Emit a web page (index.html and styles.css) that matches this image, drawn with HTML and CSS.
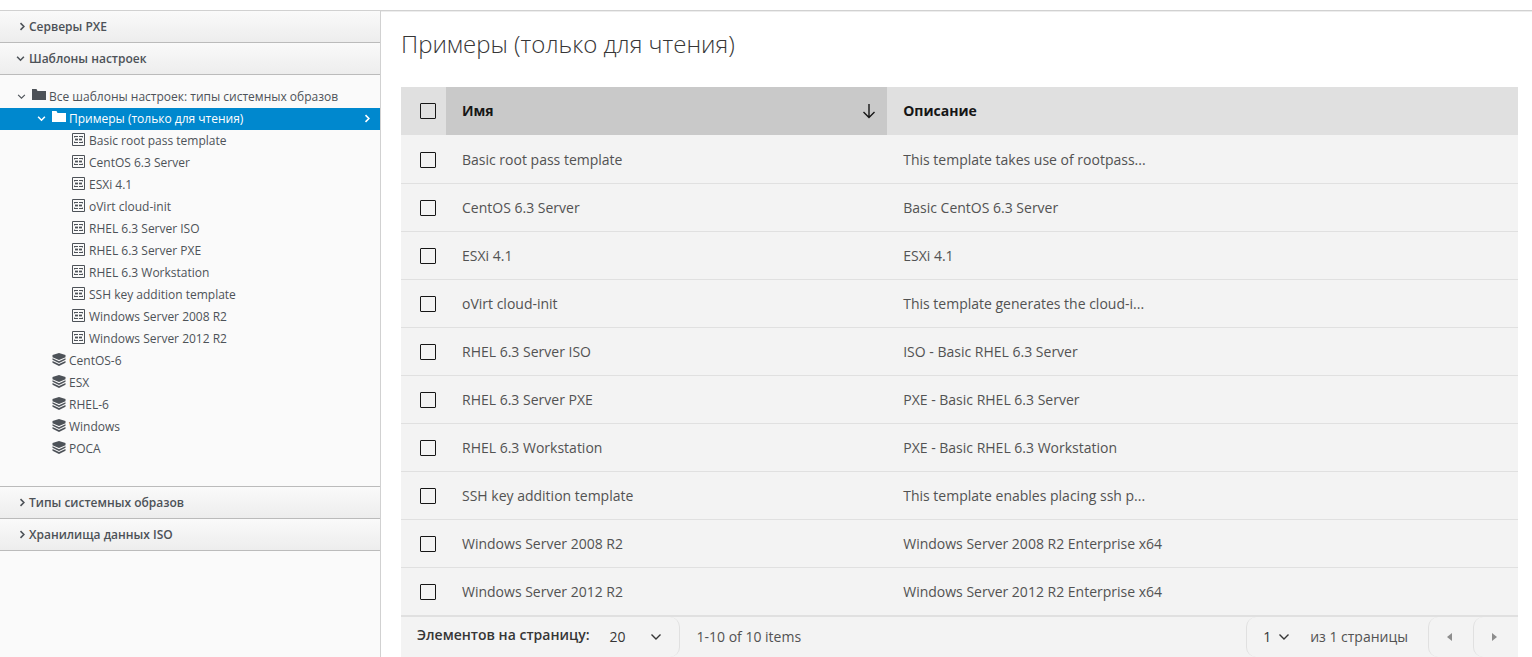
FILE: index.html
```html
<!DOCTYPE html>
<html lang="ru">
    <head>
        <meta charset="UTF-8">
        <title>Шаблоны настроек</title>
        <link rel="stylesheet" href="styles.css">
    </head>
    <body>
        <!-- Shared icons -->
        <svg class="sprite" aria-hidden="true">
            <symbol id="i-right" viewBox="0 0 8 8"><path d="M4 1 7 4 4 7"/></symbol>
            <symbol id="i-down" viewBox="0 0 8 8"><path d="M1 2.500 4 5.500 7 2.500"/></symbol>
            <symbol id="i-folder" viewBox="0 0 14 12"><path d="M0 1V0h4.500L5.500 2H14v9H0z"/></symbol>
            <symbol id="i-template" viewBox="0 0 13 13">
                <path d="M.5.5h12v12H.5z" fill="none" stroke="currentColor"/>
                <path d="M2 3h4v1H2zM7 3h4v1H7zM3 6h3v1H3zM7 6h3v1H7zM2 9h4v1H2zM7 9h4v1H7z"/>
                <path d="M2 4h1v1H2zM10 4h1v1h-1zM3 5h3v1H3zM7 5h3v1H7zM3 7h3v1H3zM7 7h3v1H7zM2 8h1v1H2zM10 8h1v1h-1z" opacity=".4"/>
            </symbol>
            <symbol id="i-layers" viewBox="0 0 14 13">
                <path d="M7 0l6.500 2v2.200L7 7 .5 4.200V2z"/>
                <path d="M.5 5.300 7 8.200l6.500-2.900v1.500L7 10 .5 6.800z"/>
                <path d="M.5 7.900 7 11.100l6.500-3.200v1.900L7 13 .5 9.800z"/>
            </symbol>
            <symbol id="i-sort" viewBox="0 0 14 16"><path d="M7 1v13.500M1.500 9 7 14.500 12.500 9"/></symbol>
            <symbol id="i-chevron" viewBox="0 0 12 8"><path d="M1.500 1.500 6 6l4.500-4.500"/></symbol>
        </svg>

        <div class="layout">
            <aside class="sidebar">
                <button class="panel-head" aria-expanded="false"><svg><use href="#i-right"/></svg>Серверы PXE</button>
                <button class="panel-head" aria-expanded="true"><svg><use href="#i-down"/></svg>Шаблоны настроек</button>
                <nav class="tree" id="tree"></nav>
                <button class="panel-head" aria-expanded="false"><svg><use href="#i-right"/></svg>Типы системных образов</button>
                <button class="panel-head" aria-expanded="false"><svg><use href="#i-right"/></svg>Хранилища данных ISO</button>
            </aside>

            <main class="content">
                <h1>Примеры (только для чтения)</h1>
                <table class="data-table">
                    <colgroup>
                        <col class="col-check">
                        <col class="col-name">
                        <col>
                    </colgroup>
                    <thead>
                        <tr>
                            <th><input type="checkbox" aria-label="Выбрать все"></th>
                            <th class="sorted" aria-sort="ascending">
                                <button class="sort-btn"><span>Имя</span><svg><use href="#i-sort"/></svg></button>
                            </th>
                            <th><span>Описание</span></th>
                        </tr>
                    </thead>
                    <tbody id="rows"></tbody>
                </table>

                <div class="pagination">
                    <div class="page-size">
                        <label for="pageSize">Элементов на страницу:</label>
                        <div class="select size-select">
                            <select id="pageSize"><option>20</option><option>50</option></select>
                            <svg><use href="#i-chevron"/></svg>
                        </div>
                    </div>
                    <span class="range">1-10 of 10 items</span>
                    <div class="page-num">
                        <div class="select num-select">
                            <select id="page" aria-label="Страница"><option>1</option></select>
                            <svg><use href="#i-chevron"/></svg>
                        </div>
                        <label for="page">из 1 страницы</label>
                    </div>
                    <button class="page-btn" aria-label="Назад"><svg viewBox="0 0 5 8"><path d="M5 0v8L0 4z"/></svg></button>
                    <button class="page-btn" aria-label="Вперёд"><svg viewBox="0 0 5 8"><path d="M0 0v8l5-4z"/></svg></button>
                </div>
            </main>
        </div>

        <script>
            const templates = [
                ["Basic root pass template", "This template takes use of rootpass..."],
                ["CentOS 6.3 Server", "Basic CentOS 6.3 Server"],
                ["ESXi 4.1", "ESXi 4.1"],
                ["oVirt cloud-init", "This template generates the cloud-i..."],
                ["RHEL 6.3 Server ISO", "ISO - Basic RHEL 6.3 Server"],
                ["RHEL 6.3 Server PXE", "PXE - Basic RHEL 6.3 Server"],
                ["RHEL 6.3 Workstation", "PXE - Basic RHEL 6.3 Workstation"],
                ["SSH key addition template", "This template enables placing ssh p..."],
                ["Windows Server 2008 R2", "Windows Server 2008 R2 Enterprise x64"],
                ["Windows Server 2012 R2", "Windows Server 2012 R2 Enterprise x64"]
            ];
            const imageTypes = ["CentOS-6", "ESX", "RHEL-6", "Windows", "РОСА"];

            // One line of the tree
            function node(text, level, icon, open, selected) {
                return `<a href="#" class="node level-${level}${selected ? " selected" : ""}">
                    <span class="caret">${open ? '<svg><use href="#i-down"/></svg>' : ""}</span>
                    <svg class="icon ${icon}"><use href="#i-${icon}"/></svg>
                    <span>${text}</span>
                    ${selected ? '<svg class="go"><use href="#i-right"/></svg>' : ""}
                </a>`;
            }

            document.getElementById("tree").innerHTML =
                node("Все шаблоны настроек: типы системных образов", 1, "folder", true, false) +
                node("Примеры (только для чтения)", 2, "folder", true, true) +
                templates.map(t => node(t[0], 3, "template")).join("") +
                imageTypes.map(t => node(t, 2, "layers")).join("");

            document.getElementById("rows").innerHTML = templates.map(t => `
                <tr>
                    <td><input type="checkbox" aria-label="${t[0]}"></td>
                    <td>${t[0]}</td>
                    <td>${t[1]}</td>
                </tr>`).join("");
        </script>
    </body>
</html>
```

FILE: styles.css
```css
* {
    box-sizing: border-box;
}
body {
    margin: 0;
    padding-top: 10px;
    background: #fff;
    font-family: "Open Sans", sans-serif;
    font-size: 12px;
    color: #4d5258;
}
button,
select {
    font: inherit;
    color: inherit;
    background: none;
    border: none;
    padding: 0;
    cursor: pointer;
}
svg {
    flex: none;
    fill: currentColor;
}
.sprite {
    position: absolute;
    width: 0;
    height: 0;
}
.layout {
    display: flex;
    min-height: calc(100vh - 10px);
    border-top: 1px solid #d1d1d1;
}

/* Sidebar */
.sidebar {
    flex: 0 0 381px;
    background: #fafafa;
    border-right: 1px solid #d1d1d1;
}
.panel-head {
    display: flex;
    align-items: center;
    width: 100%;
    height: 32px;
    padding-left: 16px;
    gap: 4px;
    font-weight: 600;
    background: linear-gradient(#fafafa, #ededed);
    border-bottom: 1px solid #bbb;
}
.panel-head svg,
.caret svg,
.go {
    width: 9px;
    height: 9px;
    fill: none;
    stroke: currentColor;
    stroke-width: 1.4;
}
.tree {
    padding: 11px 0 26px;
    border-bottom: 1px solid #bbb;
}
.node {
    display: flex;
    align-items: center;
    height: 22px;
    padding: 0 10px 2px 12px;
    color: inherit;
    text-decoration: none;
}
.level-2 {
    padding-left: 32px;
}
.level-3 {
    padding-left: 52px;
}
.caret {
    display: flex;
    width: 20px;
    padding-left: 5px;
}
.caret svg {
    stroke-width: 1;
}
.icon {
    width: 14px;
    height: 13px;
    margin: 0 3px 2px 0;
}
.folder {
    height: 12px;
}
.template {
    width: 13px;
    margin-right: 4px;
}
.selected {
    background: #0088ce;
    color: #fff;
}
.selected .caret svg,
.go {
    stroke-width: 1.4;
}
.go {
    margin-left: auto;
}

/* Content */
.content {
    flex: 1;
    min-width: 0;
    padding: 15px 14px 0 20px;
    border-top: 1px solid #ededed;
    font-size: 14px;
    color: #525252;
}
h1 {
    margin: 0 0 27px;
    font-size: 24px;
    font-weight: 300;
    line-height: 33px;
    color: #363636;
}
.data-table {
    width: 100%;
    table-layout: fixed;
    border-collapse: separate;
    border-spacing: 0;
    background: #f3f3f3;
}
.col-check {
    width: 45px;
}
.col-name {
    width: 39.5%;
}
th,
td {
    height: 48px;
    padding: 0 16px;
    text-align: left;
}
th {
    background: #e0e0e0;
    font-weight: 700;
    color: #161616;
}
th span {
    display: block;
    padding-bottom: 2px;
}
td {
    border-bottom: 1px solid #e0e0e0;
}
tbody tr:first-child td {
    height: 49px;
    padding-top: 1px;
}
.sorted {
    background: #c9c9c9;
    padding-right: 11px;
}
.sort-btn {
    display: flex;
    align-items: center;
    justify-content: space-between;
    width: 100%;
}
.sort-btn svg {
    width: 14px;
    height: 16px;
    fill: none;
    stroke: currentColor;
    stroke-width: 1.4;
}
input[type="checkbox"] {
    appearance: none;
    display: block;
    width: 16px;
    height: 16px;
    margin: 0 0 0 3px;
    border: 1px solid #161616;
    border-radius: 1px;
}
input[type="checkbox"]:checked {
    background: #161616;
}

/* Pagination */
.pagination {
    display: flex;
    height: 41px;
    background: #f3f3f3;
    border-top: 1px solid #e0e0e0;
}
.page-size {
    display: flex;
    align-items: center;
    padding-left: 16px;
    border-right: 1px solid #e0e0e0;
    border-radius: 0 10px 10px 0;
}
.page-size label {
    padding-bottom: 6px;
    font-weight: 600;
    color: #363636;
}
.select {
    position: relative;
    display: flex;
    align-items: center;
    height: 40px;
    color: #363636;
}
.select select {
    appearance: none;
    width: 100%;
    height: 100%;
    padding: 0 0 2px 20px;
}
.select svg {
    position: absolute;
    right: 17px;
    width: 12px;
    height: 8px;
    fill: none;
    stroke: currentColor;
    stroke-width: 1.4;
    pointer-events: none;
}
.size-select {
    width: 90px;
}
.range,
.page-num label {
    padding-bottom: 2px;
}
.range {
    align-self: center;
    padding-left: 16px;
}
.page-num {
    display: flex;
    align-items: center;
    margin-left: auto;
    padding-right: 20px;
    border-left: 1px solid #e0e0e0;
    border-radius: 10px 0 0 10px;
}
.num-select {
    width: 63px;
}
.num-select select {
    padding-left: 16px;
}
.num-select svg {
    right: 20px;
}
.page-btn {
    display: flex;
    align-items: center;
    justify-content: center;
    width: 45px;
    padding-right: 4px;
    border-left: 1px solid #e0e0e0;
    border-radius: 10px 0 0 10px;
    color: #8d8d8d;
}
.page-btn svg {
    width: 5px;
    height: 8px;
}
```
